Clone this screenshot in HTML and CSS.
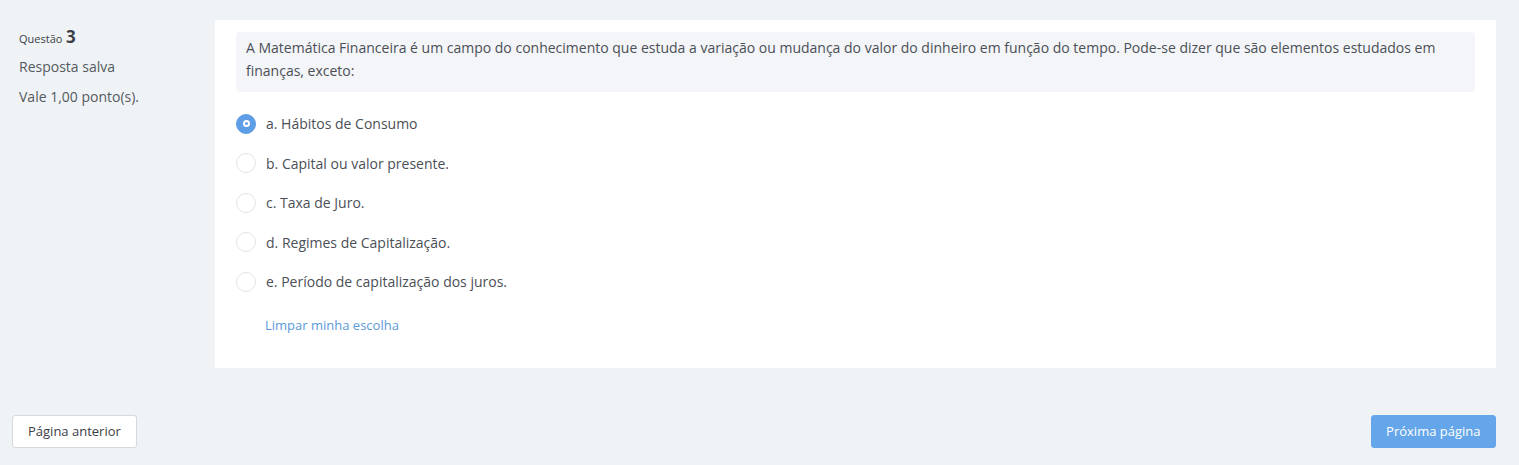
FILE: index.html
```html
<!DOCTYPE html>
<html lang="pt">
<head>
<meta charset="utf-8">
<title>Questão 3</title>
<link rel="stylesheet" href="styles.css">
</head>
<body>
<div class="page">
  <div class="que">
    <div class="info">
      <div class="qno"><span class="qlabel">Questão</span> <span class="qnum">3</span></div>
      <div class="state">Resposta salva</div>
      <div class="grade">Vale 1,00 ponto(s).</div>
    </div>
    <div class="content">
      <div class="qtext">A Matemática Financeira é um campo do conhecimento que estuda a variação ou mudança do valor do dinheiro em função do tempo. Pode-se dizer que são elementos estudados em finanças, exceto:</div>
      <div class="answers">
        <label class="opt"><span class="radio checked"></span><span>a. Hábitos de Consumo</span></label>
        <label class="opt"><span class="radio"></span><span>b. Capital ou valor presente.</span></label>
        <label class="opt"><span class="radio"></span><span>c. Taxa de Juro.</span></label>
        <label class="opt"><span class="radio"></span><span>d. Regimes de Capitalização.</span></label>
        <label class="opt"><span class="radio"></span><span>e. Período de capitalização dos juros.</span></label>
      </div>
      <a class="clear" href="#">Limpar minha escolha</a>
    </div>
  </div>
  <div class="nav">
    <button class="btn btn-prev">Página anterior</button>
    <button class="btn btn-next">Próxima página</button>
  </div>
</div>
</body>
</html>
```
FILE: styles.css
```css
html, body {
  margin: 0;
  padding: 0;
}
body {
  background: #eff3f5;
  font-family: "Open Sans", "Liberation Sans", sans-serif;
  font-size: 14px;
  color: #4b4f56;
}
.page {
  padding: 20px 23px 0 12px;
}
.que {
  display: flex;
}
.info {
  width: 203px;
  flex: none;
  padding-left: 7px;
  box-sizing: border-box;
}
.qno {
  height: 30px;
  line-height: 30px;
  margin-top: 2px;
  color: #3c4046;
}
.qlabel {
  font-size: 11px;
}
.qnum {
  font-size: 17px;
  font-weight: 700;
}
.state, .grade {
  line-height: 30px;
  color: #555a61;
}
.content {
  flex: 1;
  background: #fff;
  padding: 12px 21px 34px 21px;
}
.qtext {
  background: #f3f5f8;
  border-radius: 4px;
  padding: 4px 10px 9px 10px;
  line-height: 23.4px;
  color: #4b4f56;
}
.answers {
  display: flex;
  flex-direction: column;
  padding-top: 12px;
}
.opt {
  display: flex;
  align-items: center;
  gap: 10px;
  height: 39.6px;
  color: #4b4f56;
}
.radio {
  width: 20px;
  height: 20px;
  box-sizing: border-box;
  border-radius: 50%;
  border: 1px solid #e2e4e7;
  background: #fff;
  flex: none;
  position: relative;
}
.radio.checked {
  background: #5d9ee6;
  border-color: #5d9ee6;
}
.radio.checked::after {
  content: "";
  position: absolute;
  left: 50%;
  top: 50%;
  width: 3px;
  height: 3px;
  margin: -3.5px 0 0 -3.5px;
  border: 2px solid #fff;
  border-radius: 50%;
  background: #5d9ee6;
}
.clear {
  display: inline-block;
  margin: 14px 0 0 29px;
  font-size: 13px;
  color: #5b9ad9;
  text-decoration: none;
}
.nav {
  display: flex;
  justify-content: space-between;
  margin-top: 47px;
}
.btn {
  font-family: "Open Sans", "Liberation Sans", sans-serif;
  font-size: 13px;
  height: 33px;
  padding: 0 15px;
  border-radius: 3px;
  cursor: pointer;
}
.btn-prev {
  background: #fff;
  border: 1px solid #d5d8dc;
  color: #3c4046;
}
.btn-next {
  background: #65a6ea;
  border: 1px solid #65a6ea;
  color: #fff;
  padding: 0 14.5px;
}
```
